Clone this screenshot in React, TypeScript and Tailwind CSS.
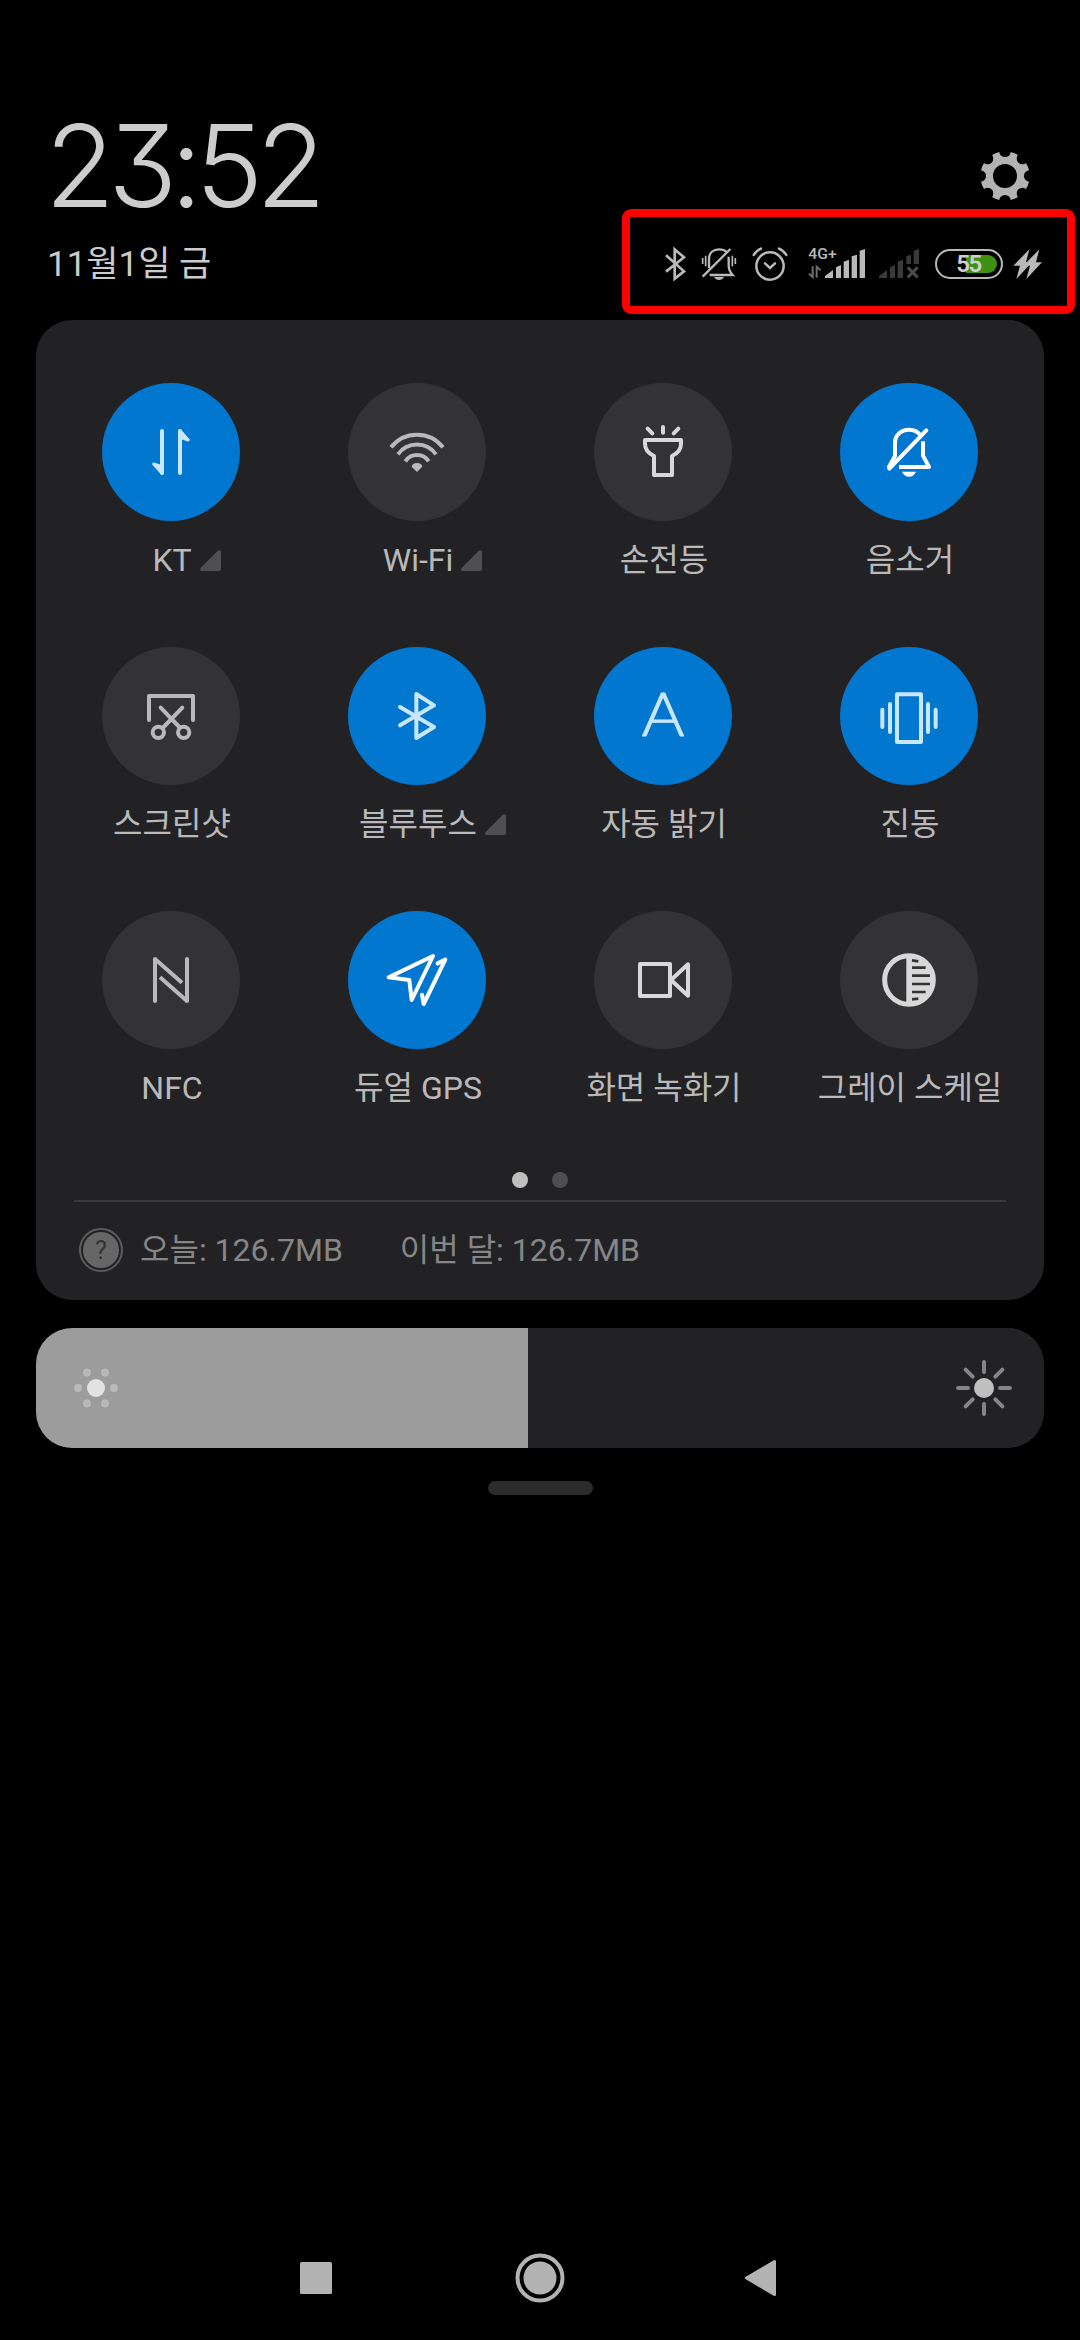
import type { ReactNode } from "react"
import clsx from "clsx"

type Tile = {
  label: string
  active?: boolean
  expandable?: boolean
  color: string
  icon: ReactNode
}

const tiles: Tile[] = [
  {
    label: "KT",
    active: true,
    expandable: true,
    color: "text-[#c8e6fc]",
    icon: (
      <>
        <path d="M-27 -63V63M27 63V-63" />
        <path d="M-27 64L-52 36L-27 44ZM27 -64L52 -36L27 -44Z" fill="currentColor" strokeWidth="9" />
      </>
    ),
  },
  {
    label: "Wi-Fi",
    expandable: true,
    color: "text-[#b9b9ba]",
    icon: (
      <>
        <g strokeLinecap="butt">
          <path d="M-78 -14A99 99 0 0 1 78 -14" />
          <path d="M-57 7A70 70 0 0 1 57 7" />
          <path d="M-35 28A42 42 0 0 1 35 28" />
        </g>
        <path d="M0 60L-16 44Q-14 33 0 33Q14 33 16 44Z" fill="currentColor" stroke="none" />
      </>
    ),
  },
  {
    label: "손전등",
    color: "text-[#d8d8d8]",
    icon: (
      <>
        <path d="M0 -75V-58M-46 -70L-32 -56M46 -70L32 -56" />
        <path d="M-54 -36H54V-24C54 -8 44 4 27 12V69H-27V12C-44 4 -54 -8 -54 -24Z" />
      </>
    ),
  },
  {
    label: "음소거",
    active: true,
    color: "text-white",
    icon: (
      <>
        <path d="M-60 44L-42 12V-28C-42 -52 -22 -67 0 -67C14 -67 27 -61 35 -50" />
        <path d="M-59 50L52 -65" />
        <path d="M42 -32V11L60 45H-30" strokeLinecap="butt" />
        <path d="M-21 59H21Q14 74 0 74Q-14 74 -21 59Z" fill="currentColor" stroke="none" />
      </>
    ),
  },
  {
    label: "스크린샷",
    color: "text-[#b9b9ba]",
    icon: (
      <>
        <path d="M-66 12V-60H66V12" />
        <path d="M-31 -25L25 33M34 -25L-22 33" />
        <circle cx="-38" cy="49" r="17" />
        <circle cx="38" cy="49" r="17" />
      </>
    ),
  },
  {
    label: "블루투스",
    active: true,
    expandable: true,
    color: "text-[#c8e6fc]",
    icon: <path d="M-51 -27L51 33L-2 66V-66L51 -32L-51 28" />,
  },
  {
    label: "자동 밝기",
    active: true,
    color: "text-[#c8e6fc]",
    icon: (
      <text
        x="-64"
        y="61"
        textLength="128"
        lengthAdjust="spacingAndGlyphs"
        fill="currentColor"
        strokeWidth="3"
        className="font-['Lato',sans-serif] text-[182px] font-light"
      >
        A
      </text>
    ),
  },
  {
    label: "진동",
    active: true,
    color: "text-[#c8e6fc]",
    icon: (
      <>
        <rect x="-36" y="-65" width="72" height="143" />
        <path d="M-80 -19V33M-57 -36V48M57 -36V48M80 -19V33" />
      </>
    ),
  },
  {
    label: "NFC",
    color: "text-[#b9b9ba]",
    icon: (
      <>
        <path d="M-48 63V-63M48 -63V63" />
        <path d="M-48 -63L33 8M48 63L-33 -8" strokeLinecap="butt" />
      </>
    ),
  },
  {
    label: "듀얼 GPS",
    active: true,
    color: "text-white",
    icon: (
      <>
        <path d="M48 -72L-85 -8L-23 0L-16 60Z" />
        <path d="M62 -50L85 -61L20 72L15 44" />
      </>
    ),
  },
  {
    label: "화면 녹화기",
    color: "text-[#d8d8d8]",
    icon: (
      <>
        <rect x="-69" y="-48" width="90" height="96" />
        <path d="M24 0L75 -47V47Z" />
      </>
    ),
  },
  {
    label: "그레이 스케일",
    color: "text-[#d8d8d8]",
    icon: (
      <>
        <circle r="73" strokeWidth="15" />
        <path d="M-8 -76H0A76 76 0 0 1 0 76H-8Z" fill="currentColor" stroke="none" />
        <path
          d="M9 -59L28 -56M9 -37H50M9 -13H63M9 12H63M9 36H50M9 58L28 56"
          stroke="#333335"
          strokeWidth="8"
          strokeLinecap="butt"
        />
      </>
    ),
  },
]

const notches = [0, 45, 90, 135, 180, 225, 270, 315]

function GearIcon({ className }: { className?: string }) {
  return (
    <svg viewBox="-25 -25 50 50" className={clsx("h-[50px] w-[50px]", className)}>
      <mask id="gear">
        <circle r="24.7" fill="white" />
        <circle r="12" fill="black" />
        {notches.map((angle) => (
          <circle key={angle} cy="-24.6" r="5.7" fill="black" transform={`rotate(${angle})`} />
        ))}
      </mask>
      <rect x="-25" y="-25" width="50" height="50" fill="#b3b3b3" mask="url(#gear)" />
    </svg>
  )
}

function StatusIcons() {
  return (
    <div className="flex h-[105px] w-[453px] items-start rounded-[9px] border-8 border-[#ff0000] pt-[29px] pl-[33px] text-[#b9b9b9]">
      {/* Bluetooth */}
      <svg viewBox="0 0 75 108" className="h-9 w-[25px] shrink-0" fill="none" stroke="currentColor" strokeWidth="8">
        <path d="M9 28L63 76L35 98V10L63 34L9 77" />
      </svg>

      {/* Muted bell */}
      <svg
        viewBox="0 0 120 108"
        className="ml-[11px] h-9 w-10 shrink-0"
        fill="none"
        stroke="currentColor"
        strokeWidth="7"
      >
        <path d="M30 66V38C30 20 43 10 60 10C70 10 77 12 83 18" />
        <path d="M11 92L94 9" />
        <path d="M89 32V58C89 72 93 79 101 87H32" />
        <path d="M45 93H75Q70 102 60 102Q50 102 45 93Z" fill="currentColor" stroke="none" />
        <path d="M11 36V54M20 29V61M100 29V61M109 36V54" strokeWidth="5" />
      </svg>

      {/* Alarm */}
      <svg
        viewBox="0 0 120 108"
        className="ml-[11px] h-9 w-10 shrink-0"
        fill="none"
        stroke="currentColor"
        strokeWidth="7.5"
        strokeLinecap="round"
      >
        <circle cx="60" cy="60" r="41" />
        <path d="M45 52L60 66L75 52" />
        <path d="M11 27C15 20 24 12 33 8M87 8C96 12 105 20 109 27" />
      </svg>

      {/* Mobile signal */}
      <svg viewBox="0 0 180 108" className="ml-[17px] h-9 w-[60px] shrink-0 overflow-visible" fill="currentColor">
        <text
          x="4"
          y="39"
          textLength="85"
          lengthAdjust="spacingAndGlyphs"
          className="font-['Roboto',sans-serif] text-[46px] font-medium"
        >
          4G+
        </text>
        <path d="M17 61V93L6 83M29 95V62L41 73" fill="none" stroke="#6e6e6e" strokeWidth="6" />
        <path d="M54 96V90L78 72V96ZM87 96V64L102 57V96ZM110 96V47L126 41V96ZM134 96V31L150 26V96ZM158 96V14L174 9V96Z" />
      </svg>

      {/* Second SIM without service */}
      <svg viewBox="0 0 132 108" className="ml-[10px] h-9 w-11 shrink-0" fill="#3a3a3a">
        <path d="M6 96V90L30 72V96ZM39 96V64L54 57V96ZM62 96V47L78 41V96ZM88 54V31L102 26V54ZM110 54V14L126 9V54Z" />
        <path d="M92 64L122 94M122 64L92 94" fill="none" stroke="#4a4a4a" strokeWidth="9" />
      </svg>

      {/* Battery */}
      <div className="relative mt-[3px] ml-[14px] flex h-[30px] w-[68px] shrink-0 items-center justify-end rounded-full border-[2.5px] border-[#b9b9b9] pr-[4px]">
        <div className="h-[18px] w-[31px] rounded-r-full bg-[#3f9113]" />
        <span className="absolute inset-0 flex items-center justify-center pr-px font-['Roboto',sans-serif] text-[24px] leading-none font-semibold tracking-[-1.5px] text-[#cfcfcf]">
          55
        </span>
      </div>
      <svg viewBox="0 0 93 108" className="ml-[9px] h-9 w-[31px] shrink-0" fill="currentColor">
        <path d="M52 10L4 59H24L13 99L60 49H42Z" />
        <path d="M82 10L34 59H54L43 99L90 49H72Z" />
      </svg>
    </div>
  )
}

function QuickTile({ tile }: { tile: Tile }) {
  return (
    <div className="flex flex-col items-center">
      <div
        className={clsx(
          "flex h-[138px] w-[138px] items-center justify-center rounded-full",
          tile.active ? "bg-[#0277d0]" : "bg-[#333335]",
          tile.color,
        )}
      >
        <svg
          viewBox="-105 -105 210 210"
          className="h-[70px] w-[70px] overflow-visible"
          fill="none"
          stroke="currentColor"
          strokeWidth="12"
          strokeLinecap="round"
          strokeLinejoin="round"
        >
          {tile.icon}
        </svg>
      </div>
      <div className="relative mt-[19px] h-10 pl-0.5 text-[32px] leading-10 whitespace-nowrap text-[#b9b9ba]">
        {tile.label}
        {tile.expandable && (
          <svg viewBox="0 0 21 21" className="absolute top-[10px] left-full ml-2 h-[21px] w-[21px]" fill="#4f4f51">
            <path d="M1 21Q-1 19.500 1 17.500L17.500 1Q21 -1 21 2V19Q21 21 19 21Z" />
          </svg>
        )}
      </div>
    </div>
  )
}

function DimSun() {
  return (
    <svg viewBox="-24 -24 48 48" className="h-12 w-12" fill="#b9b9b9">
      <circle r="9" fill="#e2e2e2" />
      <circle cx="-18" r="4" />
      <circle cx="18" r="4" />
      <circle cx="-9" cy="-15.600" r="4" />
      <circle cx="9" cy="-15.600" r="4" />
      <circle cx="-9" cy="15.600" r="4" />
      <circle cx="9" cy="15.600" r="4" />
    </svg>
  )
}

function BrightSun() {
  return (
    <svg viewBox="-30 -30 60 60" className="h-[60px] w-[60px]" stroke="#858586" strokeWidth="4" strokeLinecap="round">
      <circle r="10" fill="#bfbfbf" stroke="none" />
      {notches.map((angle) => (
        <path key={angle} d="M0 -16V-26" transform={`rotate(${angle})`} />
      ))}
    </svg>
  )
}

export default function App() {
  return (
    <div className="flex h-[2340px] w-[1080px] flex-col overflow-hidden bg-black font-['Roboto','Noto_Sans_CJK_KR',sans-serif]">
      {/* Header */}
      <header className="flex h-[320px] justify-between pr-[5px] pl-[45px] text-[#cccccc]">
        <div className="pt-[106px]">
          <div className="font-['Inter',sans-serif] text-[114px] leading-[120px] font-light tracking-[-7px] [font-feature-settings:'cv09'_1]">
            23:52
          </div>
          <div className="mt-[19px] pl-0.5 text-[35px] leading-10">11월1일 금</div>
        </div>
        <div className="flex flex-col items-end pt-[151px]">
          <GearIcon className="mr-[45px]" />
          <div className="mt-2">
            <StatusIcons />
          </div>
        </div>
      </header>

      {/* Quick settings */}
      <section className="mx-9 h-[980px] rounded-[36px] bg-[#222224] pt-[63px]">
        <div className="grid grid-cols-4 gap-y-[67px] px-3">
          {tiles.map((tile) => (
            <QuickTile key={tile.label} tile={tile} />
          ))}
        </div>
        <div className="mt-16 flex justify-center gap-6">
          <span className="h-4 w-4 rounded-full bg-[#bfbfbf]" />
          <span className="h-4 w-4 rounded-full bg-[#4f4f51]" />
        </div>
        <div className="mx-[38px] mt-3 flex h-[98px] items-center border-t-2 border-[#3a3a3c] pl-[5px] text-[32px] leading-10 text-[#868687]">
          <div className="flex h-11 w-11 items-center justify-center rounded-full border-2 border-[#5c5c5d]">
            <div className="flex h-9 w-9 items-center justify-center rounded-full bg-[#666667] text-[25px] leading-none text-[#333335]">
              ?
            </div>
          </div>
          <span className="ml-[17px]">오늘: 126.7MB</span>
          <span className="ml-[57px]">이번 달: 126.7MB</span>
        </div>
      </section>

      {/* Brightness */}
      <section className="mx-9 mt-7 flex h-[120px] overflow-hidden rounded-[36px] bg-[#222224]">
        <div className="flex w-[492px] items-center bg-[#9c9c9c] pl-9">
          <DimSun />
        </div>
        <div className="flex flex-1 items-center justify-end pr-[30px]">
          <BrightSun />
        </div>
      </section>
      <div className="mx-auto mt-[33px] h-[14px] w-[105px] rounded-full bg-[#2b2b2c]" />

      {/* Navigation bar */}
      <nav className="mt-auto flex h-[124px] items-center pl-[291px]">
        <svg viewBox="0 0 50 50" className="h-[50px] w-[50px]" fill="#b3b3b3">
          <rect x="9" y="9" width="32" height="32" rx="1.500" />
        </svg>
        <svg viewBox="0 0 50 50" className="ml-[174px] h-[50px] w-[50px]" fill="#b3b3b3">
          <circle cx="25" cy="25" r="22.500" fill="none" stroke="#b3b3b3" strokeWidth="4" />
          <circle cx="25" cy="25" r="16.500" />
        </svg>
        <svg
          viewBox="0 0 50 50"
          className="ml-[170px] h-[50px] w-[50px]"
          fill="#b3b3b3"
          stroke="#b3b3b3"
          strokeWidth="3"
          strokeLinejoin="round"
        >
          <path d="M11.500 25L39.500 8.500V41.500Z" />
        </svg>
      </nav>
    </div>
  )
}
